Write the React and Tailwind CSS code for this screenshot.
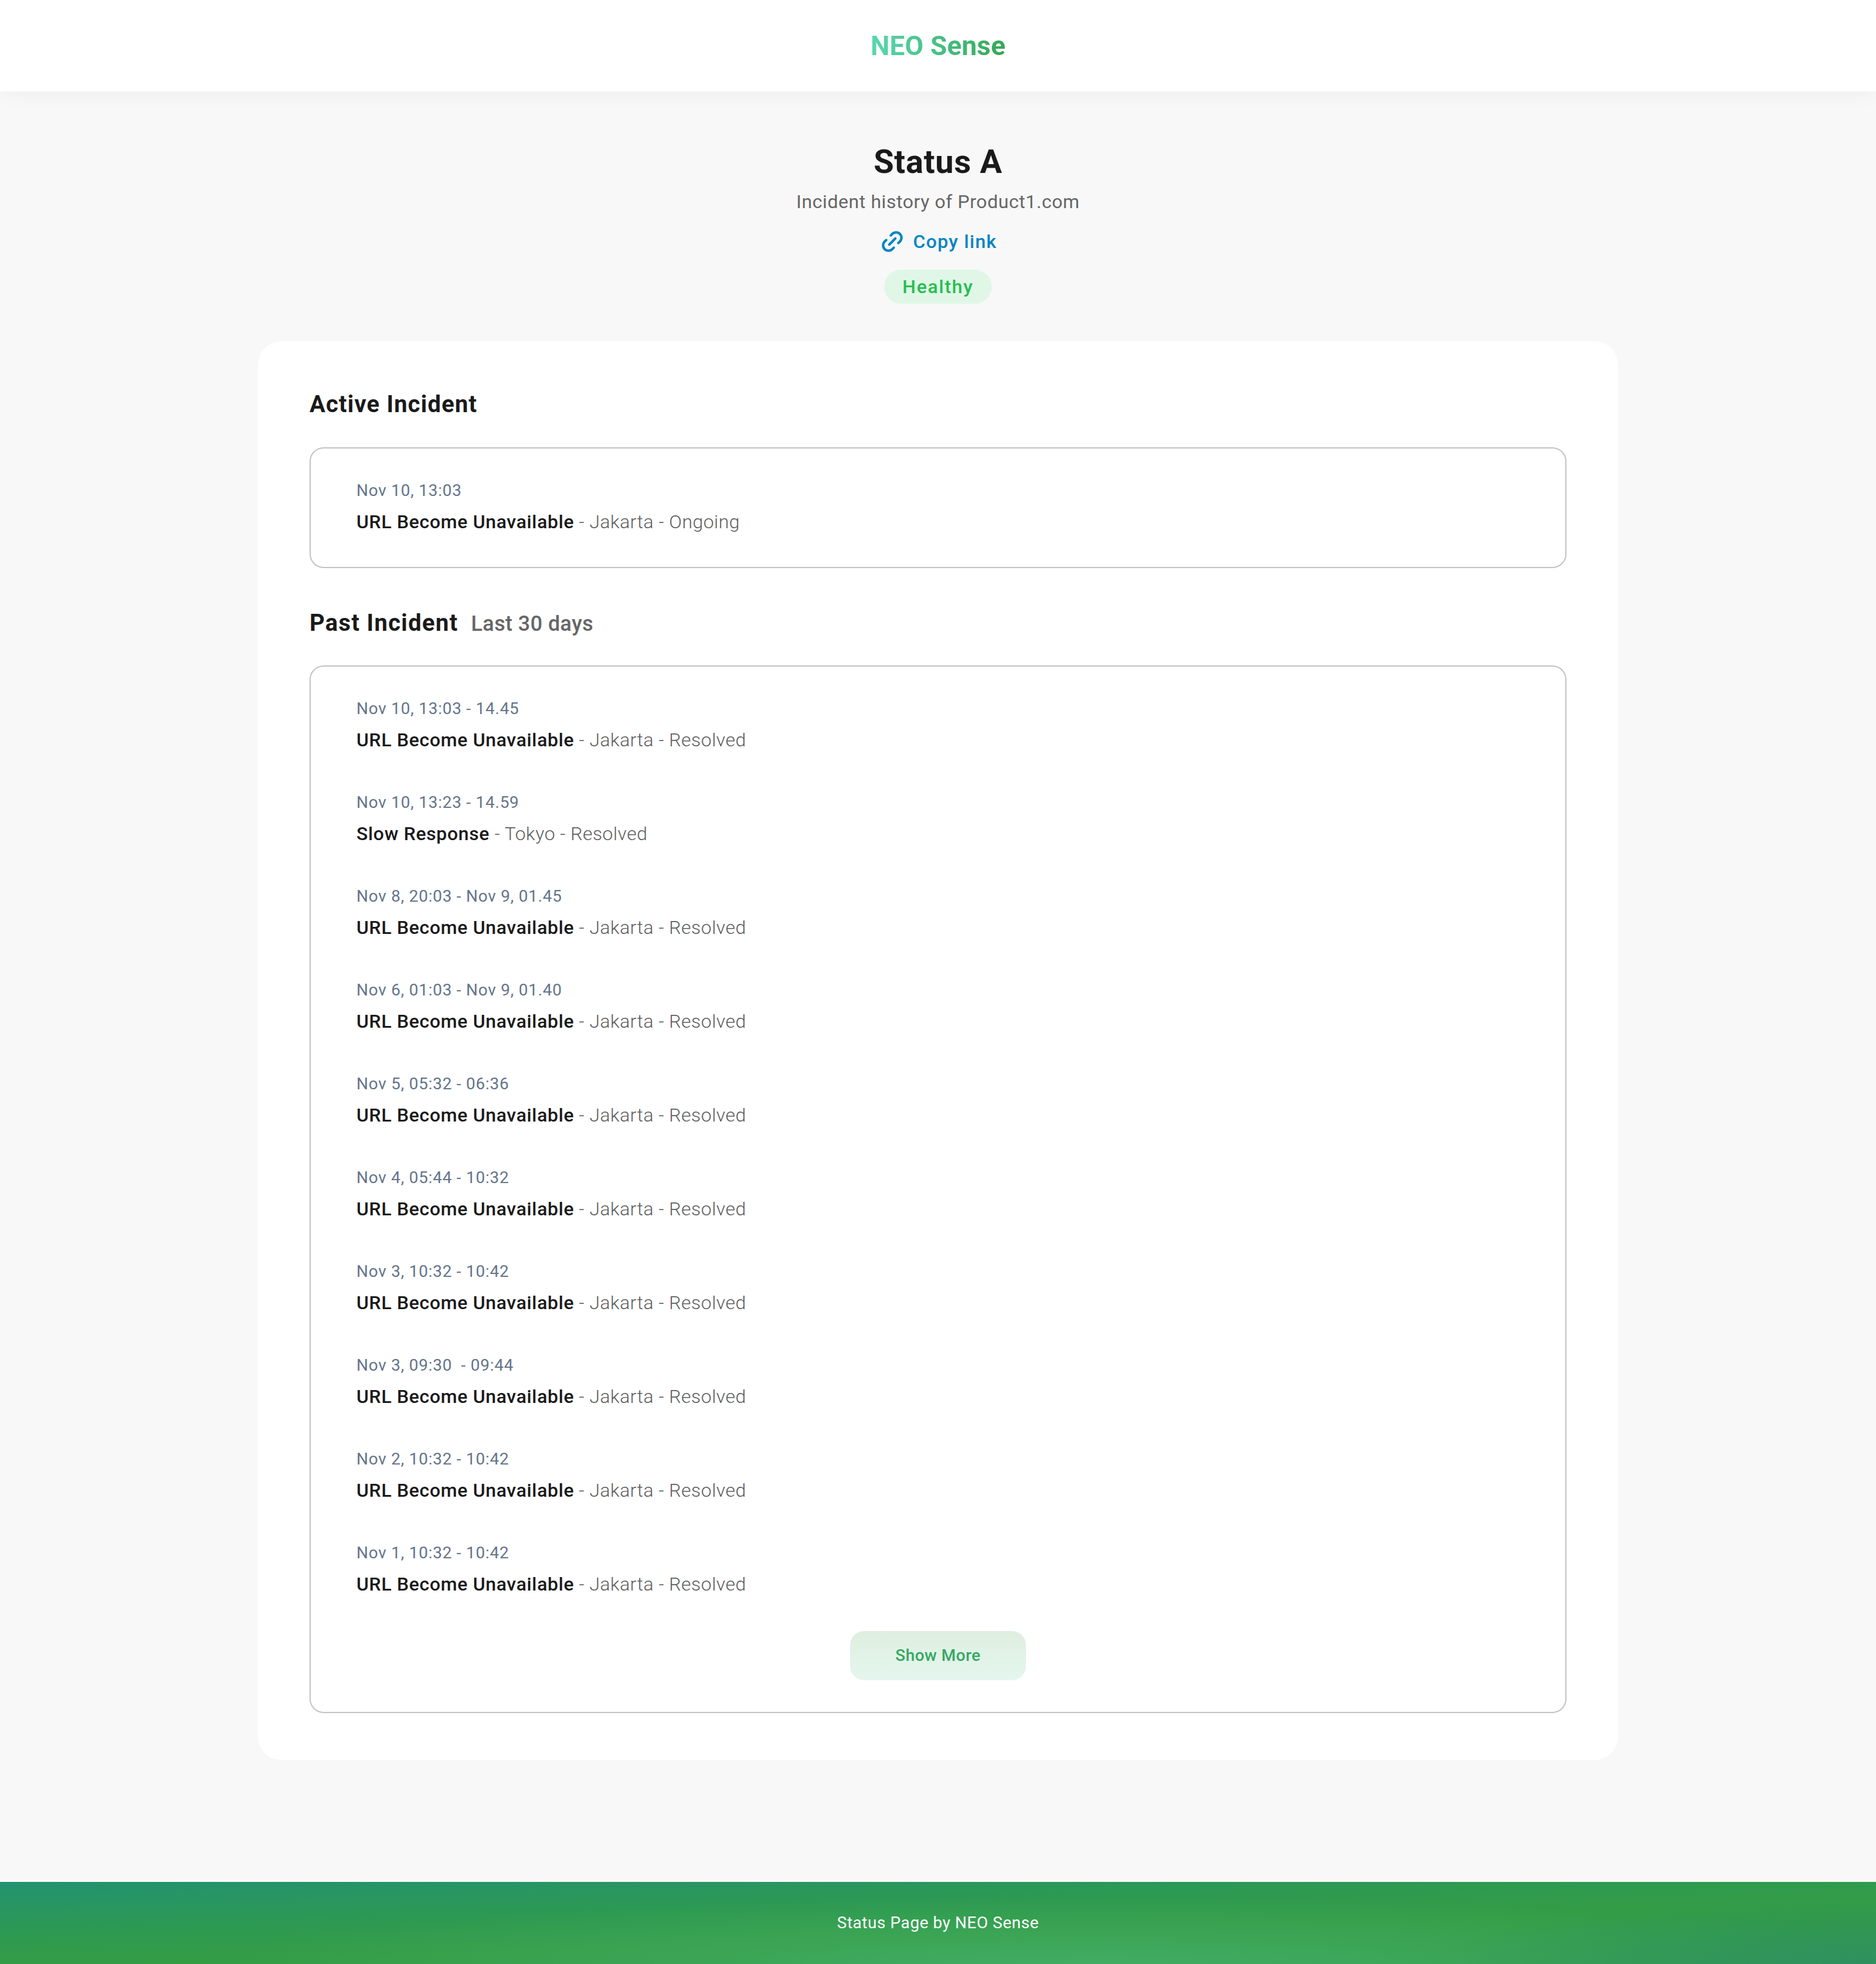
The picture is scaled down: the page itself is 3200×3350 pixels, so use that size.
import React from "react";

const font = "font-['Roboto',sans-serif]";

const pastIncidents = [
  { time: "Nov 10, 13:03 - 14.45", title: "URL Become Unavailable", place: "Jakarta" },
  { time: "Nov 10, 13:23 - 14.59", title: "Slow Response", place: "Tokyo" },
  { time: "Nov 8, 20:03 - Nov 9, 01.45", title: "URL Become Unavailable", place: "Jakarta" },
  { time: "Nov 6, 01:03 - Nov 9, 01.40", title: "URL Become Unavailable", place: "Jakarta" },
  { time: "Nov 5, 05:32 - 06:36", title: "URL Become Unavailable", place: "Jakarta" },
  { time: "Nov 4, 05:44 - 10:32", title: "URL Become Unavailable", place: "Jakarta" },
  { time: "Nov 3, 10:32 - 10:42", title: "URL Become Unavailable", place: "Jakarta" },
  { time: "Nov 3, 09:30 \u00a0- 09:44", title: "URL Become Unavailable", place: "Jakarta" },
  { time: "Nov 2, 10:32 - 10:42", title: "URL Become Unavailable", place: "Jakarta" },
  { time: "Nov 1, 10:32 - 10:42", title: "URL Become Unavailable", place: "Jakarta" },
];

const IncidentRow = ({ time, title, place, state }) => (
  <div className="h-[104px]">
    <p className="text-[28px] leading-[40px] text-[#64748b] tracking-[0.75px]">{time}</p>
    <p className="mt-[9px] text-[32px] leading-[48px] text-[#5e5e5e] tracking-[0.45px] font-light">
      <span className="font-medium text-[#1a1a1a] tracking-[0.65px]">{title}</span> - {place} - {state}
    </p>
  </div>
);

const LinkIcon = () => (
  <svg viewBox="0 0 24 24" fill="none" stroke="#0284c7" strokeWidth="2.3" strokeLinecap="round" strokeLinejoin="round" className="w-[44px] h-[44px] -rotate-45">
    <path d="M9 17H7A5 5 0 0 1 7 7h2" />
    <path d="M15 7h2a5 5 0 1 1 0 10h-2" />
    <line x1="8" y1="12" x2="16" y2="12" />
  </svg>
);

export default function App() {
  return (
    <div className={`${font} min-h-[3350px] flex flex-col bg-[#f8f8f8]`}>
      {/* header */}
      <header className="h-[156px] shrink-0 bg-white flex items-center justify-center shadow-[0_8px_32px_rgba(0,0,0,0.035)] relative">
        <span className="text-[46px] font-bold tracking-[0.15px] text-transparent bg-clip-text bg-gradient-to-r from-[#5ad8b0] to-[#35a755]">NEO Sense</span>
      </header>

      <main className="flex-1 flex flex-col items-center">
        <h1 className="mt-[78px] text-[56px] leading-[84px] font-bold text-[#1a1a1a] tracking-[0.7px]">Status A</h1>
        <p className="mt-[2px] text-[32px] leading-[48px] text-[#666666] tracking-[0.57px]">Incident history of Product1.com</p>
        <a className="mt-[20px] flex items-center gap-[14px] text-[32px] leading-[48px] font-medium text-[#0284c7] tracking-[1.3px]">
          <LinkIcon />
          Copy link
        </a>
        <div className="mt-[24px] h-[58px] w-[184px] rounded-full bg-[#e0f7e8] flex items-center justify-center text-[32px] font-medium text-[#27be4e] tracking-[1.7px]">
          Healthy
        </div>

        {/* main card */}
        <section className="mt-[64px] w-[2320px] h-[2420px] rounded-[40px] bg-white px-[88px] pt-[80px]">
          <h2 className="text-[40px] leading-[56px] font-bold text-[#1a1a1a] tracking-[1.15px]">Active Incident</h2>
          <div className="mt-[45px] h-[206px] border-2 border-[#c2c2c2] rounded-[24px] px-[78px] pt-[52px]">
            <IncidentRow time="Nov 10, 13:03" title="URL Become Unavailable" place="Jakarta" state="Ongoing" />
          </div>

          <div className="mt-[66px] flex items-baseline gap-[22px]">
            <h2 className="text-[40px] leading-[56px] font-bold text-[#1a1a1a] tracking-[1.3px]">Past Incident</h2>
            <span className="text-[36px] font-medium text-[#666666] tracking-[0.4px]">Last 30 days</span>
          </div>
          <div className="mt-[44px] h-[1787px] border-2 border-[#c2c2c2] rounded-[24px] px-[78px] pt-[52px] flex flex-col gap-[56px]">
            {pastIncidents.map((item, i) => (
              <IncidentRow key={i} {...item} state="Resolved" />
            ))}
            <button className="self-center -mt-[7px] w-[300px] h-[84px] shrink-0 rounded-[24px] bg-gradient-to-b from-[#deefe0] to-[#e5f6ee] text-[28px] font-medium text-[#34a862] tracking-[0.5px]">
              Show More
            </button>
          </div>
        </section>
      </main>

      {/* footer */}
      <footer className="h-[140px] shrink-0 flex items-center justify-center text-[28px] text-white tracking-[0.55px] bg-[radial-gradient(ellipse_760px_120px_at_100%_100%,rgba(47,144,96,1),transparent),radial-gradient(ellipse_1500px_110px_at_58%_100%,rgba(66,172,100,1),transparent),linear-gradient(178deg,#239270_0%,#2e9a50_38%,#339d44_60%,#309b44_100%)]">
        Status Page by NEO Sense
      </footer>
    </div>
  );
}
